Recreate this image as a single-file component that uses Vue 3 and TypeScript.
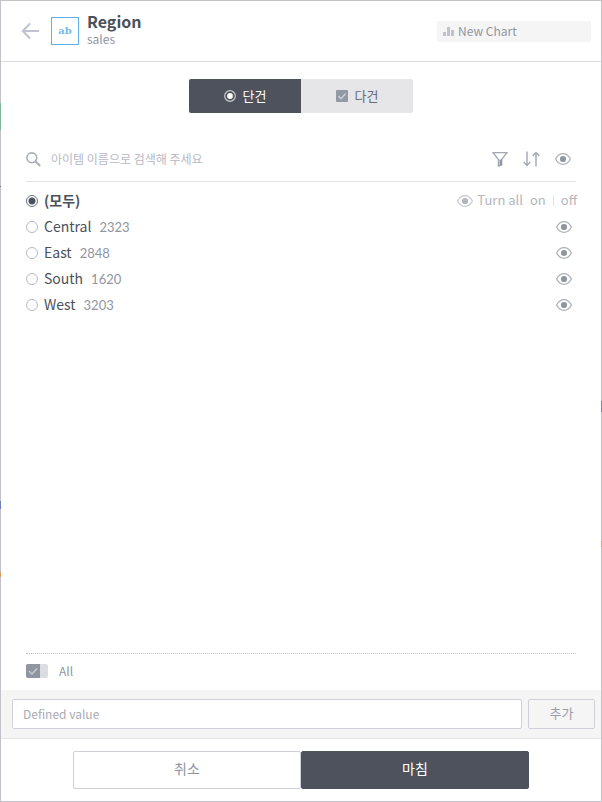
<script setup lang="ts">
import { defineComponent, h, ref } from 'vue'

interface Item {
  name: string
  count: number
}

const items: Item[] = [
  { name: 'Central', count: 2323 },
  { name: 'East', count: 2848 },
  { name: 'South', count: 1620 },
  { name: 'West', count: 3203 },
]

const selected = ref('all')
const mode = ref('single')
const keyword = ref('')
const definedValue = ref('')
const allChecked = ref(true)

const EyeIcon = defineComponent({
  render() {
    return h('svg', { width: 16, height: 12, viewBox: '0 0 16 12', 'aria-hidden': 'true' }, [
      h('path', {
        d: 'M.6 6C2.4 2.5 5 .7 8 .7s5.600 1.800 7.400 5.300C13.600 9.500 11 11.300 8 11.300S2.400 9.500.6 6Z',
        fill: 'none',
        stroke: 'currentColor',
        'stroke-width': 1.200,
        'stroke-opacity': 0.75,
      }),
      h('circle', { cx: 8, cy: 6, r: 3.100, fill: 'currentColor' }),
    ])
  },
})
</script>

<template>
  <div class="page">
    <main class="dialog">
      <header class="header">
        <button class="icon-btn back" type="button" aria-label="Back">
          <svg width="18" height="18" viewBox="0 0 18 18" fill="none" stroke="#c0c2cd" stroke-width="2">
            <path d="M9 1.500 1.800 9 9 16.500M2 9h16" />
          </svg>
        </button>
        <span class="type">ab</span>
        <div class="heading">
          <h1>Region</h1>
          <p>sales</p>
        </div>
        <div class="chart-tag">
          <svg width="11" height="9" viewBox="0 0 11 9" fill="#c0c2cc">
            <path d="M0 5h3v4H0zM4 0h3v9H4zM8 3h3v6H8z" />
          </svg>
          <span>New Chart</span>
        </div>
      </header>

      <section class="body">
        <div class="tabs">
          <button type="button" class="tab" :class="{ active: mode === 'single' }" @click="mode = 'single'">
            <svg width="12" height="12" viewBox="0 0 12 12">
              <circle cx="6" cy="6" r="5.300" fill="none" stroke="#c9cbcf" stroke-width="1.200" />
              <circle cx="6" cy="6" r="2.900" fill="#fff" />
            </svg>
            <span>단건</span>
          </button>
          <button type="button" class="tab" :class="{ active: mode === 'multi' }" @click="mode = 'multi'">
            <svg width="12" height="12" viewBox="0 0 12 12">
              <rect width="12" height="12" rx="1" fill="#9299a5" />
              <path d="m2.500 6.200 2.500 2.400 4.600-5" fill="none" stroke="#d5d8dd" stroke-width="1.300" />
            </svg>
            <span>다건</span>
          </button>
        </div>

        <div class="search">
          <svg width="15" height="15" viewBox="0 0 15 15" fill="none" stroke="#a9aeb7">
            <circle cx="5.800" cy="5.800" r="4.900" stroke-width="1.600" />
            <path d="m9.300 9.300 4.900 4.700" stroke-width="2" />
          </svg>
          <input v-model="keyword" type="text" aria-label="아이템 이름으로 검색해 주세요" placeholder="아이템 이름으로 검색해 주세요" />
          <div class="tools">
            <button class="icon-btn" type="button" aria-label="Filter">
              <svg width="16" height="15" viewBox="0 0 16 15">
                <path d="M1.200.7h13.600L9.700 7.500v5.300L6.400 14V7.500Z" fill="none" stroke="#a3a8b1" stroke-width="1.300" />
                <path d="M7.500 7.500H10V13l-2.500 1.500Z" fill="#8f96a0" />
              </svg>
            </button>
            <button class="icon-btn" type="button" aria-label="Sort">
              <svg width="17" height="16" viewBox="0 0 17 16" fill="none" stroke="#a3a8b1" stroke-width="1.400">
                <path d="M4 .5v14M.7 11 4 14.500 7.300 11M13 15.500v-14M9.700 5 13 1.500 16.300 5" />
              </svg>
            </button>
            <button class="icon-btn eye" type="button" aria-label="Visibility"><EyeIcon /></button>
          </div>
        </div>

        <ul class="list">
          <li>
            <label class="option all">
              <input v-model="selected" type="radio" name="item" value="all" />
              <span class="name">(모두)</span>
            </label>
            <div class="turn">
              <EyeIcon />
              <span>Turn all</span>
              <button type="button">on</button>
              <i class="bar"></i>
              <button type="button">off</button>
            </div>
          </li>
          <li v-for="item in items" :key="item.name">
            <label class="option">
              <input v-model="selected" type="radio" name="item" :value="item.name" />
              <span class="name">{{ item.name }}</span>
              <span class="count">{{ item.count }}</span>
            </label>
            <button class="icon-btn eye" type="button" :aria-label="`Show ${item.name}`"><EyeIcon /></button>
          </li>
        </ul>

        <div class="select-all">
          <label>
            <input v-model="allChecked" class="toggle" type="checkbox" />
            <span>All</span>
          </label>
        </div>
      </section>

      <div class="define">
        <input v-model="definedValue" type="text" aria-label="Defined value" placeholder="Defined value" />
        <button type="button">추가</button>
      </div>

      <footer class="footer">
        <button type="button" class="cancel">취소</button>
        <button type="button" class="done">마침</button>
      </footer>
    </main>
  </div>
</template>

<style>
html,
body,
#app {
  height: 100%;
}
body {
  margin: 0;
}
</style>

<style scoped>
* {
  box-sizing: border-box;
}
.page {
  min-height: 100%;
  display: flex;
  padding: 1px;
  font-family: 'Noto Sans CJK KR', sans-serif;
  color: #4b515b;
  background:
    linear-gradient(#7db89b, #7db89b) 0 103px / 1px 27px no-repeat,
    linear-gradient(#77777f, #77777f) 0 186px / 1px 1px no-repeat,
    linear-gradient(#6f7fc0, #6f7fc0) 0 501px / 1px 8px no-repeat,
    linear-gradient(#d69a5e, #d69a5e) 0 572px / 1px 5px no-repeat,
    linear-gradient(#7b83a8, #7b83a8) 100% 401px / 1px 11px no-repeat,
    linear-gradient(#c9a88e, #c9a88e) 100% 541px / 1px 6px no-repeat,
    #c2c2c8;
}
button,
input {
  font-family: inherit;
  margin: 0;
}
button {
  cursor: pointer;
  padding: 0;
}
svg {
  display: block;
  flex: none;
}
.dialog {
  flex: 1;
  min-width: 0;
  display: flex;
  flex-direction: column;
  background: #fff;
}
.icon-btn {
  display: flex;
  border: 0;
  background: none;
}
.eye {
  color: #8f96a0;
}
.header {
  display: flex;
  align-items: center;
  height: 61px;
  padding: 0 10px 0 20px;
  border-bottom: 1px solid #dcdce0;
}
.type {
  display: flex;
  align-items: center;
  justify-content: center;
  width: 28px;
  height: 28px;
  margin: 0 8px 0 12px;
  border: 1px solid #5fb0ea;
  color: #74bbee;
  font: bold 10px/12px 'DejaVu Serif', serif;
}
.heading {
  flex: 1;
  padding-bottom: 4px;
}
h1 {
  margin: 0;
  font-size: 16px;
  line-height: 20px;
  font-weight: 700;
}
p {
  margin: 0;
  font-size: 12px;
  line-height: 16px;
  color: #90959f;
}
.chart-tag {
  display: flex;
  align-items: center;
  gap: 4px;
  width: 27%;
  min-width: 120px;
  height: 21px;
  padding: 0 6px;
  background: #f5f5f5;
  color: #9095a0;
  font-size: 12px;
  line-height: 20px;
}
.body {
  flex: 1;
  display: flex;
  flex-direction: column;
  padding: 17px 25px 0;
}
.tabs {
  display: flex;
  align-self: center;
  border-radius: 2px;
  overflow: hidden;
  margin-bottom: 24px;
}
.tab {
  display: flex;
  align-items: center;
  justify-content: center;
  gap: 7px;
  width: 112px;
  height: 34px;
  border: 0;
  background: #e6e6e9;
  color: #666c78;
  font-size: 13px;
}
.tab span {
  padding-bottom: 2px;
}
.tab.active {
  background: #4d525c;
  color: #fff;
}
.search {
  display: flex;
  align-items: center;
  height: 45px;
  border-bottom: 1px solid #e3e3e6;
}
.search input {
  flex: 1;
  min-width: 0;
  height: 30px;
  padding: 0 10px 2px;
  border: 0;
  outline: 0;
  background: none;
  font-size: 12px;
  color: #4b515b;
}
.search input::placeholder {
  color: #b7b9c3;
  opacity: 1;
}
.tools {
  display: flex;
  align-items: center;
  gap: 15px;
  padding-right: 5px;
}
.list {
  list-style: none;
  margin: 6px 0 0;
  padding: 0;
}
.list li {
  display: flex;
  align-items: center;
  justify-content: space-between;
  height: 26px;
}
.list .eye {
  padding-right: 4px;
}
.option {
  display: flex;
  align-items: center;
  font-size: 14px;
  line-height: 24px;
}
.option .name {
  padding-bottom: 2px;
}
.option input {
  appearance: none;
  width: 12px;
  height: 12px;
  margin-right: 6px;
  border: 1px solid #b7b9c8;
  border-radius: 50%;
  background: #fff;
}
.option input:checked {
  border-color: #6d727c;
  background: radial-gradient(circle, #4b515b 3px, #fff 4px);
}
.all .name {
  font-weight: 700;
}
.count {
  margin-left: 8px;
  font-family: Lato, sans-serif;
  font-size: 13px;
  color: #90959f;
}
.turn {
  display: flex;
  align-items: center;
  color: #b4b6be;
  font-size: 13px;
  line-height: 24px;
  margin-right: -1px;
}
.turn span,
.turn button {
  padding-bottom: 2px;
}
.turn svg {
  margin-right: 4px;
}
.turn button {
  border: 0;
  background: none;
  color: inherit;
  font-size: 13px;
  line-height: 24px;
  margin-left: 7px;
}
.bar {
  width: 1px;
  height: 10px;
  margin-left: 7px;
  background: #e0e0e5;
}
.select-all {
  margin-top: auto;
  height: 37px;
  border-top: 1px dotted #bdbdc4;
  display: flex;
  align-items: center;
  padding-bottom: 2px;
}
.select-all label {
  display: flex;
  align-items: center;
  gap: 11px;
  font-size: 12px;
  line-height: 20px;
  color: #90959f;
}
.toggle {
  appearance: none;
  display: flex;
  width: 22px;
  height: 14px;
  border-radius: 2px;
  background: #dcdde2;
  overflow: hidden;
}
.toggle::before {
  content: '';
  width: 14px;
  height: 14px;
  background: #9096a1 url("data:image/svg+xml,%3Csvg xmlns='http://www.w3.org/2000/svg' viewBox='0 0 14 14'%3E%3Cpath d='m3 7 3 3 5-5.500' fill='none' stroke='%23c9ccd2' stroke-width='1.300'/%3E%3C/svg%3E");
}
.define {
  display: flex;
  gap: 6px;
  padding: 9px 6px 9px 11px;
  background: #f5f5f5;
  border-bottom: 1px solid #e5e5e8;
}
.define input {
  flex: 1;
  min-width: 0;
  height: 30px;
  padding: 0 10px 2px;
  border: 1px solid #d0d1d8;
  border-radius: 2px;
  background: #fff;
  font-size: 12px;
}
.define input::placeholder {
  color: #a8acb6;
  opacity: 1;
}
.define button {
  width: 67px;
  height: 30px;
  padding-bottom: 4px;
  border: 1px solid #d0d1d8;
  border-radius: 2px;
  background: #f5f5f5;
  color: #9a9ea8;
  font-size: 13px;
}
.footer {
  display: flex;
  padding: 12px 12%;
}
.footer button {
  flex: 1;
  height: 38px;
  padding-bottom: 4px;
  border: 1px solid #d0d1d8;
  border-radius: 2px;
  background: #fff;
  color: #90959f;
  font-size: 14px;
}
.footer .done {
  border-color: #4d525c;
  background: #4d525c;
  color: #fff;
}
</style>
